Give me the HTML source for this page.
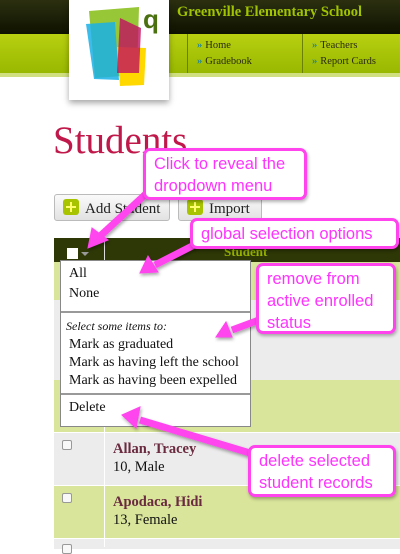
<!DOCTYPE html>
<html><head><style>
*{margin:0;padding:0;box-sizing:border-box}
body{width:400px;height:547px;overflow:hidden;background:#fff;position:relative;font-family:"Liberation Serif",Georgia,serif}
.a{position:absolute}
.co{position:absolute;background:#fff;border:3px solid #ff44ee;border-radius:7px;color:#ff33ff;font-family:"Liberation Sans",Arial,sans-serif;font-size:16.5px;line-height:22px;padding:2px 8px;box-shadow:1px 2px 3px rgba(0,0,0,.3)}
.nav{font-size:10.5px;color:#2a2a10}
.nav b{color:#1a7fa0;font-weight:bold;margin-right:3px}
.btn{position:absolute;top:194px;height:27px;border:1px solid #bbb;border-radius:3px;background:linear-gradient(#fafafa,#e2e2e2);font-size:15px;color:#222;padding:4px 0 0 8px}
.plus{display:inline-block;width:16px;height:16px;background:#a8c400;border-radius:3px;vertical-align:-2px;margin-right:6px;position:relative}
.plus:before{content:"";position:absolute;left:3px;top:7px;width:10px;height:2px;background:#ffff70}
.plus:after{content:"";position:absolute;left:7px;top:3px;width:2px;height:10px;background:#ffff70}
.dd{font-size:14px;color:#111}
.cb{position:absolute;left:62px;width:10px;height:10px;border:1px solid #999;border-radius:2px;background:#f8f8f8}
</style></head><body>
<div class="a" style="left:0;top:0;width:400px;height:34px;background:linear-gradient(#2c3010,#0e1200)"></div>
<div class="a" style="left:0;top:34px;width:400px;height:39px;background:linear-gradient(#b8d010,#98b800)"></div>
<div class="a" style="left:0;top:73px;width:400px;height:4px;background:#d0e080"></div>
<div class="a" style="left:187px;top:34px;width:1px;height:39px;background:#6a8000"></div>
<div class="a" style="left:302px;top:34px;width:1px;height:39px;background:#6a8000"></div>
<div class="a" style="left:177px;top:4px;font-size:14.5px;font-weight:bold;color:#a0c400">Greenville Elementary School</div>
<div class="a nav" style="left:197px;top:38px;line-height:16px"><b>»</b>Home<br><b>»</b>Gradebook</div>
<div class="a nav" style="left:312px;top:38px;line-height:16px"><b>»</b>Teachers<br><b>»</b>Report Cards</div>
<div class="a" style="left:69px;top:0;width:100px;height:100px;background:#fff;box-shadow:0 3px 6px rgba(0,0,0,.35)">
<svg width="100" height="100">
<polygon points="20,11 70,7 68,75 26,78" fill="#8cc020" opacity=".9"/>
<polygon points="48,47 77,48 75,85 51,86" fill="#ffd800"/>
<polygon points="17,24 46,22 50,80 25,79" fill="#1ab0e8" opacity=".85"/>
<polygon points="51,18 72,28 70,73 48,73" fill="#c01060" opacity=".8"/>
<text x="74" y="28" font-family="Liberation Sans" font-weight="bold" font-size="26" fill="#4a7010">q</text>
</svg></div>
<div class="a" style="left:53px;top:118px;font-size:39px;color:#c0184a">Students</div>
<div class="btn" style="left:54px;width:116px"><span class="plus"></span>Add Student</div>
<div class="btn" style="left:178px;width:84px"><span class="plus"></span>Import</div>
<div class="a" style="left:54px;top:238px;width:346px;height:24px;background:#2e3806"></div>
<div class="a" style="left:104px;top:238px;width:1px;height:24px;background:#ddd"></div>
<div class="a" style="left:224px;top:244px;font-size:13px;font-weight:bold;color:#98b400">Student</div>
<div class="a" style="left:67px;top:248px;width:11px;height:11px;background:#fff"></div>
<div class="a" style="left:81px;top:252px;border:4px solid transparent;border-top:4px solid #999"></div>
<div class="a" style="left:54px;top:262px;width:346px;height:38px;background:#d8e59a"></div>
<div class="a" style="left:54px;top:300px;width:346px;height:80px;background:#ececec"></div>
<div class="a" style="left:54px;top:380px;width:346px;height:52px;background:#d8e59a"></div>
<div class="a" style="left:54px;top:433px;width:346px;height:52px;background:#ececec"></div>
<div class="a" style="left:54px;top:486px;width:346px;height:52px;background:#d8e59a"></div>
<div class="a" style="left:54px;top:539px;width:346px;height:10px;background:#ececec"></div>
<div class="a" style="left:104px;top:262px;width:1px;height:285px;background:#fff"></div>
<div class="cb" style="top:440px"></div><div class="cb" style="top:493px"></div><div class="cb" style="top:544px"></div>
<div class="a" style="left:113px;top:440px;font-size:14.5px;line-height:18px;color:#111"><b style="color:#6a2a40">Allan, Tracey</b><br>10, Male</div>
<div class="a" style="left:113px;top:493px;font-size:14.5px;line-height:18px;color:#111"><b style="color:#6a2a40">Apodaca, Hidi</b><br>13, Female</div>
<div class="a dd" style="left:60px;top:260px;width:191px;height:167px;background:#fff;border:1px solid #888">
<div style="padding:3px 8px;line-height:20px">All<br>None</div>
<div style="border-top:2px solid #999;margin-top:4px;padding:4px 4px 3px 8px;line-height:18px"><i style="font-size:12px;margin-left:-3px">Select some items to:</i><br>Mark as graduated<br>Mark as having left the school<br>Mark as having been expelled</div>
<div style="border-top:2px solid #999;padding:4px 8px;line-height:18px">Delete</div>
</div>
<svg class="a" style="left:0;top:0" width="400" height="547">
<defs><filter id="s"><feDropShadow dx="1" dy="2" stdDeviation="1.5" flood-opacity=".35"/></filter></defs>
<g fill="#ff44ee" stroke="#ff44ee" filter="url(#s)">
<line x1="148" y1="192" x2="98" y2="238" stroke-width="7"/><polygon points="88,248 92,228 108,240"/>
<line x1="196" y1="244" x2="155" y2="265" stroke-width="7"/><polygon points="140,273 148,256 158,272"/>
<line x1="259" y1="320" x2="232" y2="330" stroke-width="7"/><polygon points="216,337 226,322 232,337"/>
<line x1="250" y1="453" x2="140" y2="420" stroke-width="7"/><polygon points="122,415 140,407 136,428"/>
</g></svg>
<div class="co" style="left:143px;top:148px;width:164px;height:52px">Click to reveal the<br>dropdown menu</div>
<div class="co" style="left:190px;top:218px;width:209px;height:31px;padding-top:2px">global selection options</div>
<div class="co" style="left:256px;top:263px;width:140px;height:71px">remove from<br>active enrolled<br>status</div>
<div class="co" style="left:248px;top:445px;width:148px;height:52px">delete selected<br>student records</div>
</body></html>
